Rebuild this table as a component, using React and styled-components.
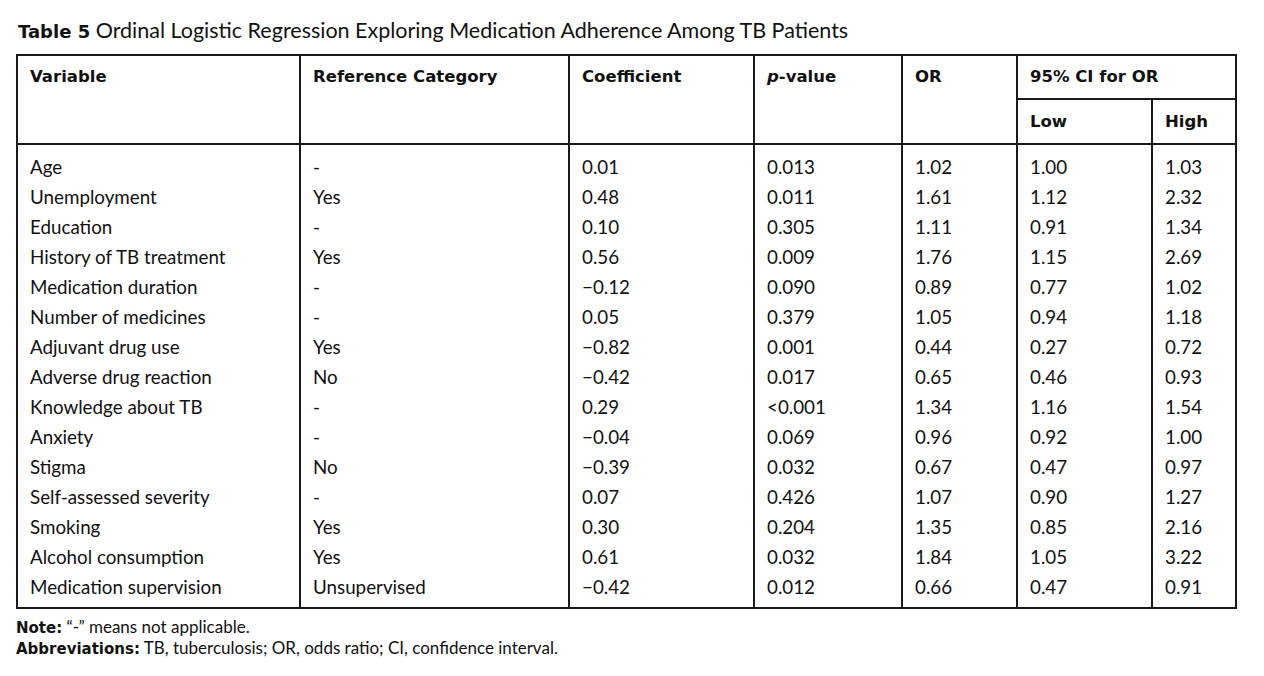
import React from "react";
import styled, { createGlobalStyle } from "styled-components";

const Global = createGlobalStyle`
  html, body { margin: 0; padding: 0; background: #fff; }
  body { font-family: "Lato", "Open Sans", sans-serif; color: #111; }
`;

const Page = styled.div`
  padding: 17px 0 0 16px;
  width: 1220px;
`;

const Title = styled.div`
  font-size: 21.5px;
  line-height: 26px;
  height: 26px;
  margin: 0 0 11px 2px;
  white-space: nowrap;
`;

const BoldLabel = styled.b`
  font-family: "DejaVu Sans", "Lato", sans-serif;
  font-weight: 700;
  font-size: ${(p) => p.$size || 15}px;
  line-height: 1;
`;

const Table = styled.table`
  border-collapse: collapse;
  width: 1219px;
  table-layout: fixed;
  border: 2px solid #1a1a1a;
`;

const Th = styled.th`
  border: 2px solid #1a1a1a;
  text-align: left;
  font-family: "DejaVu Sans", "Lato", sans-serif;
  font-weight: 700;
  font-size: 16.5px;
  line-height: 20px;
  padding: ${(p) => (p.$top ? "11px 12px 0 12px" : "0 12px")};
  vertical-align: ${(p) => (p.$top ? "top" : "middle")};
  height: ${(p) => p.$h || 42}px;
  white-space: nowrap;
  i { font-family: "DejaVu Sans", sans-serif; font-style: italic; }
`;

const Td = styled.td`
  border-left: 2px solid #1a1a1a;
  border-right: 2px solid #1a1a1a;
  font-size: 18.8px;
  height: 30px;
  line-height: 22px;
  padding: ${(p) => (p.$first ? "7px" : "0")} 12px ${(p) => (p.$last ? "5px" : "0")} 12px;
  vertical-align: middle;
  white-space: nowrap;
`;

const Notes = styled.div`
  margin-top: 7px;
  font-size: 17px;
  line-height: 21px;
`;

const NoteLine = styled.div`
  height: 21px;
  white-space: nowrap;
`;

const cols = [283, 269, 185, 148, 115, 135, 84];

const rows = [
  ["Age", "-", "0.01", "0.013", "1.02", "1.00", "1.03"],
  ["Unemployment", "Yes", "0.48", "0.011", "1.61", "1.12", "2.32"],
  ["Education", "-", "0.10", "0.305", "1.11", "0.91", "1.34"],
  ["History of TB treatment", "Yes", "0.56", "0.009", "1.76", "1.15", "2.69"],
  ["Medication duration", "-", "\u22120.12", "0.090", "0.89", "0.77", "1.02"],
  ["Number of medicines", "-", "0.05", "0.379", "1.05", "0.94", "1.18"],
  ["Adjuvant drug use", "Yes", "\u22120.82", "0.001", "0.44", "0.27", "0.72"],
  ["Adverse drug reaction", "No", "\u22120.42", "0.017", "0.65", "0.46", "0.93"],
  ["Knowledge about TB", "-", "0.29", "<0.001", "1.34", "1.16", "1.54"],
  ["Anxiety", "-", "\u22120.04", "0.069", "0.96", "0.92", "1.00"],
  ["Stigma", "No", "\u22120.39", "0.032", "0.67", "0.47", "0.97"],
  ["Self-assessed severity", "-", "0.07", "0.426", "1.07", "0.90", "1.27"],
  ["Smoking", "Yes", "0.30", "0.204", "1.35", "0.85", "2.16"],
  ["Alcohol consumption", "Yes", "0.61", "0.032", "1.84", "1.05", "3.22"],
  ["Medication supervision", "Unsupervised", "\u22120.42", "0.012", "0.66", "0.47", "0.91"],
];

export default function App() {
  return (
    <>
      <Global />
      <Page>
        <Title>
          <BoldLabel $size={18}>Table 5</BoldLabel> Ordinal Logistic Regression Exploring Medication Adherence Among TB Patients
        </Title>
        <Table>
          <colgroup>
            {cols.map((w, i) => (
              <col key={i} style={{ width: w }} />
            ))}
          </colgroup>
          <thead>
            <tr>
              <Th rowSpan={2} $top>Variable</Th>
              <Th rowSpan={2} $top>Reference Category</Th>
              <Th rowSpan={2} $top>Coefficient</Th>
              <Th rowSpan={2} $top><i>p</i>-value</Th>
              <Th rowSpan={2} $top>OR</Th>
              <Th colSpan={2} $h={42}>95% CI for OR</Th>
            </tr>
            <tr>
              <Th $h={43}>Low</Th>
              <Th $h={43}>High</Th>
            </tr>
          </thead>
          <tbody>
            {rows.map((r, i) => (
              <tr key={i}>
                {r.map((c, j) => (
                  <Td key={j} $first={i === 0} $last={i === rows.length - 1}>
                    {c}
                  </Td>
                ))}
              </tr>
            ))}
          </tbody>
        </Table>
        <Notes>
          <NoteLine><BoldLabel>Note:</BoldLabel> “-” means not applicable.</NoteLine>
          <NoteLine><BoldLabel>Abbreviations:</BoldLabel> TB, tuberculosis; OR, odds ratio; CI, confidence interval.</NoteLine>
        </Notes>
      </Page>
    </>
  );
}
